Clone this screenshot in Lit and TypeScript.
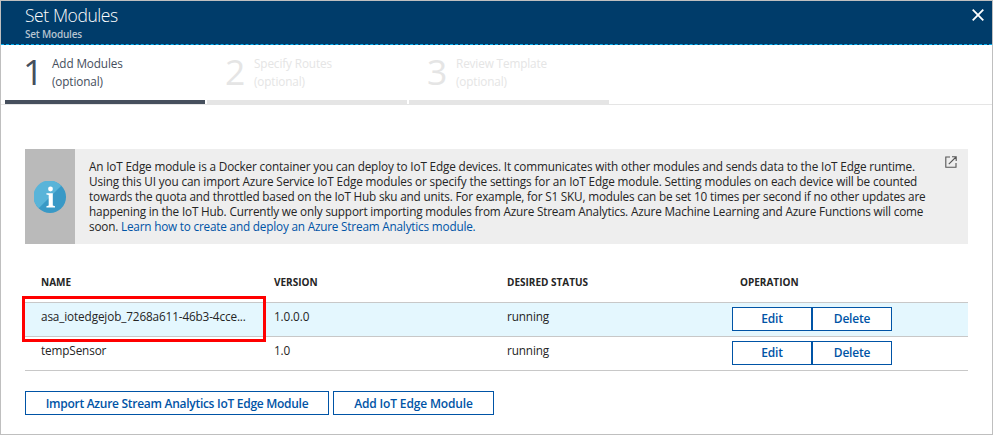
import { LitElement, html, css } from "lit";
import { customElement } from "lit/decorators.js";
import { classMap } from "lit/directives/class-map.js";

interface Step { n: number; title: string; active: boolean }
interface Module { name: string; version: string; status: string; selected: boolean }

const STEPS: Step[] = [
  { n: 1, title: "Add Modules", active: true },
  { n: 2, title: "Specify Routes", active: false },
  { n: 3, title: "Review Template", active: false },
];

const MODULES: Module[] = [
  { name: "asa_iotedgejob_7268a611-46b3-4cce...", version: "1.0.0.0", status: "running", selected: true },
  { name: "tempSensor", version: "1.0", status: "running", selected: false },
];

@customElement("app-root")
export class AppRoot extends LitElement {
  static styles = css`
    :host {
      display: block;
      position: relative;
      box-sizing: border-box;
      width: 993px;
      height: 435px;
      overflow: hidden;
      border: 1px solid #bfbfbf;
      background: #fff;
      color: #252525;
      font: 11.75px/15px "Open Sans", "Noto Sans", sans-serif;
    }
    * { box-sizing: border-box; }
    .header {
      display: flex;
      justify-content: space-between;
      height: 44px;
      padding: 4px 7px 0 24px;
      background: #003c6a;
      color: #fff;
      border-bottom: 1px dashed #00abec;
    }
    .title { font-size: 17.5px; line-height: 21px; font-weight: 300; margin: 0; letter-spacing: -0.42px; }
    .subtitle { font-size: 10px; line-height: 14px; font-weight: 600; color: #b5c3d0; letter-spacing: -0.2px; margin-top: 1px; }
    .close { width: 14px; height: 14px; margin-top: 3px; }
    .steps {
      display: flex;
      gap: 2px;
      height: 60px;
      padding-left: 4px;
      border-bottom: 1px solid #e5e5e5;
    }
    .step {
      display: flex;
      width: 200px;
      height: 60px;
      padding-left: 18px;
      border-bottom: 5px solid #e5e5e5;
      color: #e5e5e5;
    }
    .step.active { color: #464f5d; height: 59px; border-bottom: 4px solid #464f5d; }
    .num { width: 29px; font-size: 35.5px; line-height: 40px; font-weight: 400; letter-spacing: -1px; margin: 6px 0 0 0; }
    .label { line-height: 18px; margin: 9px 0 0 0; letter-spacing: -0.12px; }
    .info { display: flex; width: 943px; height: 95px; margin: 44px 0 0 24px; background: #eee; }
    .badge { width: 50px; flex: none; display: flex; align-items: center; justify-content: center; background: #bababa; }
    .text { flex: 1; min-width: 0; padding: 10px 0 0 14px; white-space: nowrap; }
    .line { display: block; height: 15px; }
    .l1 { letter-spacing: -0.154px; }
    .l2 { letter-spacing: -0.135px; }
    .l3 { letter-spacing: -0.185px; }
    .l4 { letter-spacing: -0.171px; }
    .l5 { letter-spacing: -0.19px; }
    a { color: #0054a6; text-decoration: none; }
    .popout { width: 12px; height: 12px; margin: 7px 11px 0 0; flex: none; }
    .table { width: 943px; margin: 29px 0 0 24px; }
    .row {
      display: grid;
      grid-template-columns: 233px 233px 233px 1fr;
      height: 34px;
      padding-left: 16px;
      border-bottom: 1px solid #c8c8c8;
    }
    .row > span { padding-top: 6px; letter-spacing: -0.13px; }
    .row.head { height: 30px; font-size: 10px; font-weight: 700; }
    .row.head > span { padding-top: 2px; letter-spacing: 0; }
    .row.selected { background: #e4f7fe; }
    .ops { display: flex; margin: 4px 0 0 -8px; }
    button {
      height: 24px;
      padding: 1px 0 0;
      border: 1px solid #0054a6;
      background: #fff;
      color: #0054a6;
      font: 600 12px/20px "Open Sans", "Noto Sans", sans-serif;
      letter-spacing: -0.28px;
      white-space: nowrap;
    }
    .ops button { width: 80px; padding: 0; letter-spacing: -0.2px; }
    .actions { display: flex; gap: 4px; margin: 20px 0 0 24px; }
    .import { width: 304px; }
    .add { width: 161px; letter-spacing: -0.15px; }
    .highlight {
      position: absolute;
      left: 21px;
      top: 295px;
      width: 244px;
      height: 46px;
      border: 3px solid #f00;
    }
  `;

  render() {
    return html`
      <div class="header">
        <div>
          <h1 class="title">Set Modules</h1>
          <div class="subtitle">Set Modules</div>
        </div>
        <svg class="close" viewBox="0 0 14 14"><path d="M1.7 1.7 12.3 12.3M12.3 1.7 1.7 12.3" stroke="#fff" stroke-width="1.8" fill="none" /></svg>
      </div>
      <div class="steps">
        ${STEPS.map((s) => html`
          <div class=${classMap({ step: true, active: s.active })}>
            <div class="num">${s.n}</div>
            <div class="label">${s.title}<br />(optional)</div>
          </div>`)}
      </div>
      <div class="info">
        <div class="badge">
          <svg width="32" height="32" viewBox="0 0 32 32">
            <circle cx="16" cy="16" r="16" fill="#3999c6" />
            <path d="M4.7 27.3A16 16 0 1 1 27.3 4.7Z" fill="#59b4d9" />
            <circle cx="16.5" cy="8" r="2.4" fill="#fff" />
            <path d="M12.4 12.2H18.8V24.6L21 25.2V26.6H12.4V25.2L14.7 24.6V14.1L12.4 13.5Z" fill="#fff" />
          </svg>
        </div>
        <div class="text">
          <span class="line l1">An IoT Edge module is a Docker container you can deploy to IoT Edge devices. It communicates with other modules and sends data to the IoT Edge runtime.</span>
          <span class="line l2">Using this UI you can import Azure Service IoT Edge modules or specify the settings for an IoT Edge module. Setting modules on each device will be counted</span>
          <span class="line l3">towards the quota and throttled based on the IoT Hub sku and units. For example, for S1 SKU, modules can be set 10 times per second if no other updates are</span>
          <span class="line l4">happening in the IoT Hub. Currently we only support importing modules from Azure Stream Analytics. Azure Machine Learning and Azure Functions will come</span>
          <span class="line l5">soon. <a>Learn how to create and deploy an Azure Stream Analytics module.</a></span>
        </div>
        <svg class="popout" viewBox="0 0 12 12" fill="none" stroke="#555" stroke-width="1.1">
          <path d="M5 1H.8V11.2H11V7M3.8 8.2 11 1M7 .8H11.2V5" />
        </svg>
      </div>
      <div class="table">
        <div class="row head"><span>NAME</span><span>VERSION</span><span>DESIRED STATUS</span><span>OPERATION</span></div>
        ${MODULES.map((m) => html`
          <div class=${classMap({ row: true, selected: m.selected })}>
            <span>${m.name}</span><span>${m.version}</span><span>${m.status}</span>
            <div class="ops"><button>Edit</button><button>Delete</button></div>
          </div>`)}
      </div>
      <div class="actions">
        <button class="import">Import Azure Stream Analytics IoT Edge Module</button>
        <button class="add">Add IoT Edge Module</button>
      </div>
      <div class="highlight"></div>
    `;
  }
}
